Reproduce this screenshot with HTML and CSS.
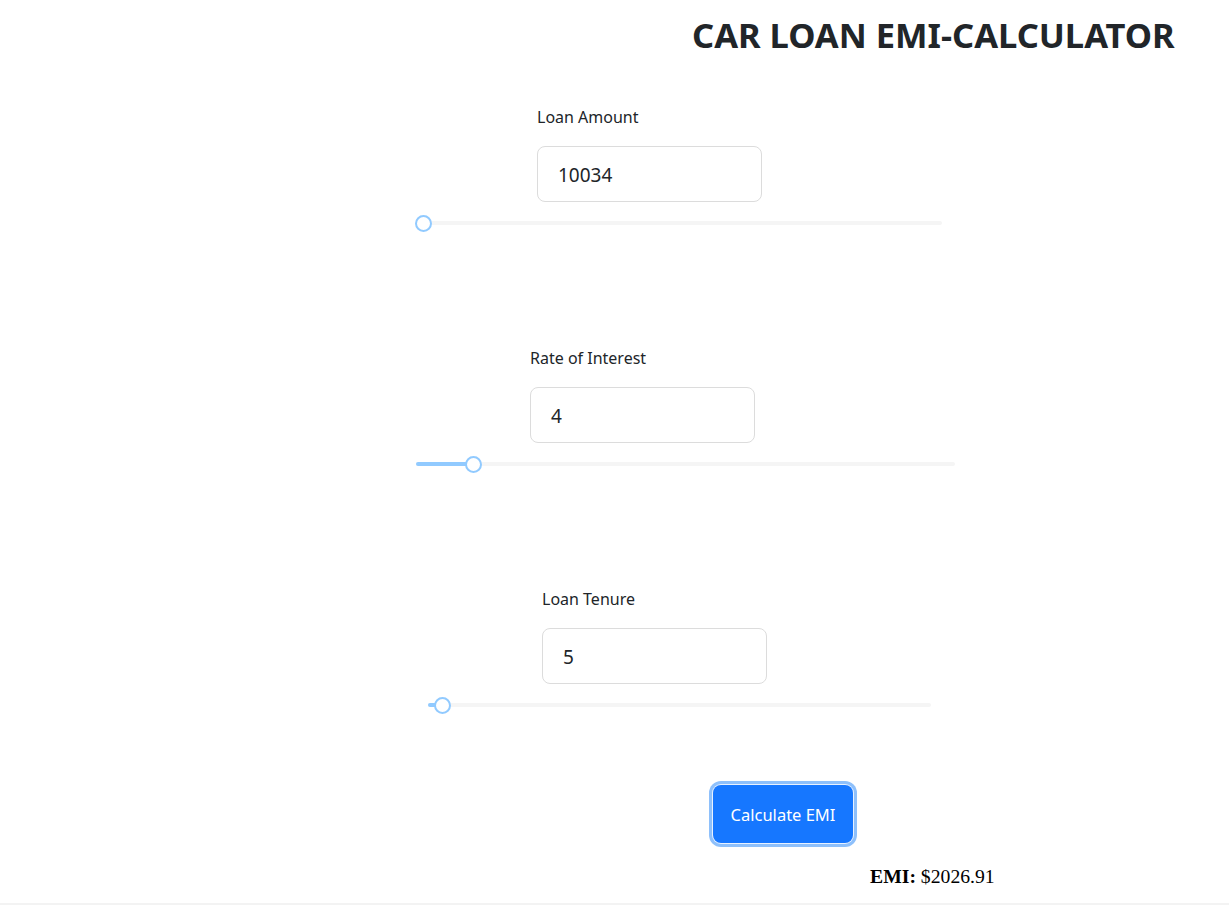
FILE: index.html
```html
<!DOCTYPE html>
<html>
<head>
<meta charset="utf-8">
<link rel="stylesheet" href="styles.css">
</head>
<body>
<div class="page">
  <header class="header">
    <h1 class="title">CAR LOAN EMI-CALCULATOR</h1>
  </header>

  <section class="group group-amount">
    <label class="label">Loan Amount</label>
    <div class="input">10034</div>
    <div class="slider">
      <div class="rail"></div>
      <div class="fill" style="width:1.3%"></div>
      <div class="handle" style="left:1.3%"></div>
    </div>
  </section>

  <section class="group group-rate">
    <label class="label">Rate of Interest</label>
    <div class="input">4</div>
    <div class="slider">
      <div class="rail"></div>
      <div class="fill" style="width:10.6%"></div>
      <div class="handle" style="left:10.6%"></div>
    </div>
  </section>

  <section class="group group-tenure">
    <label class="label">Loan Tenure</label>
    <div class="input">5</div>
    <div class="slider">
      <div class="rail"></div>
      <div class="fill" style="width:2.8%"></div>
      <div class="handle" style="left:2.8%"></div>
    </div>
  </section>

  <div class="actions">
    <button class="btn">Calculate EMI</button>
  </div>
  <p class="result"><b>EMI:</b> $2026.91</p>
  <div class="footer-line"></div>
</div>
</body>
</html>
```

FILE: styles.css
```css
* { box-sizing: border-box; }
html, body { margin: 0; padding: 0; background: #fff; }
body {
  font-family: "Noto Sans", "Open Sans", sans-serif;
  color: #212529;
}
.page { width: 1229px; }
.header {
  display: flex;
  justify-content: flex-start;
  padding-left: 692px;
  padding-top: 11px;
}
.title {
  margin: 0;
  font-size: 34.5px;
  line-height: 48px;
  font-weight: 700;
  color: #212529;
  white-space: nowrap;
}
.group {
  display: flex;
  flex-direction: column;
}
.label {
  font-size: 16px;
  line-height: 24px;
  color: #212529;
}
.input {
  margin-top: 17px;
  width: 225px;
  height: 56px;
  border: 1px solid #dcdcdc;
  border-radius: 8px;
  padding-left: 20px;
  padding-top: 2px;
  font-size: 19px;
  line-height: 52px;
  color: #212529;
}
.slider {
  position: relative;
  margin-top: 13px;
  height: 16px;
}
.rail {
  position: absolute;
  left: 0; right: 0; top: 6px;
  height: 4px;
  border-radius: 2px;
  background: #f5f5f5;
}
.fill {
  position: absolute;
  left: 0; top: 6px;
  height: 4px;
  border-radius: 2px;
  background: #91caff;
}
.handle {
  position: absolute;
  top: -0.5px;
  width: 17px;
  height: 17px;
  margin-left: -8.5px;
  border-radius: 50%;
  background: #fff;
  border: 2px solid #91caff;
}
.group-amount { margin-top: 46px; }
.group-amount .label,
.group-amount .input { margin-left: 537px; }
.group-amount .slider { margin-left: 417px; width: 525px; }

.group-rate { margin-top: 115px; }
.group-rate .label,
.group-rate .input { margin-left: 530px; }
.group-rate .slider { margin-left: 416px; width: 539px; }

.group-tenure { margin-top: 115px; }
.group-tenure .label,
.group-tenure .input { margin-left: 542px; }
.group-tenure .slider { margin-left: 428px; width: 503px; }

.actions {
  padding-left: 713px;
  padding-top: 72px;
}
.btn {
  width: 140px;
  height: 58px;
  border: none;
  border-radius: 8px;
  background: #1677ff;
  color: #fff;
  font-family: "Noto Sans", "Open Sans", sans-serif;
  font-size: 16.5px;
  box-shadow: 0 0 0 1px #e8f1ff, 0 0 0 4px #8ec0fb;
  cursor: pointer;
}
.result {
  margin: 0;
  padding-top: 22px;
  padding-left: 870px;
  font-family: "Liberation Serif", "Times New Roman", serif;
  font-size: 19.7px;
  line-height: 22px;
  color: #000;
}
.footer-line {
  margin-top: 16px;
  height: 2px;
  background: #f3f3f3;
}
```
